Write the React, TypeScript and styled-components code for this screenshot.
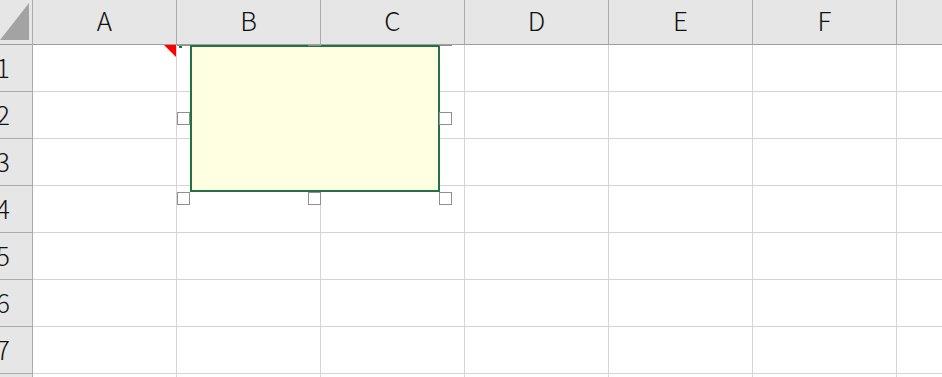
import React from 'react';
import styled, { createGlobalStyle } from 'styled-components';

const GlobalStyle = createGlobalStyle`
  html, body {
    margin: 0;
    padding: 0;
    background: #ffffff;
    overflow: hidden;
  }
`;

const palette = {
  headerBg: '#e6e6e6',
  headerLine: '#ababab',
  headerBottom: '#9e9e9e',
  gridLine: '#d4d4d4',
  green: '#217346',
  commentFill: '#ffffe1',
  handle: '#8f8f8f',
};

const COLUMNS = ['A', 'B', 'C', 'D', 'E', 'F', ''];
const ROWS = [1, 2, 3, 4, 5, 6, 7, 8];

const Sheet = styled.div`
  position: relative;
  display: grid;
  grid-template-columns: 33px repeat(${COLUMNS.length}, 144px);
  grid-template-rows: 45px repeat(${ROWS.length}, 47px);
  font-family: 'Noto Sans CJK JP', 'Noto Sans', sans-serif;
  color: #111;
`;

const Corner = styled.div`
  position: relative;
  z-index: 3;
  background: ${palette.headerBg};
  border-right: 1px solid ${palette.headerLine};
  border-bottom: 1px solid ${palette.headerBottom};
  overflow: hidden;
`;

const ColHeader = styled.div`
  position: relative;
  z-index: 3;
  display: flex;
  align-items: center;
  justify-content: center;
  padding-bottom: 6px;
  box-sizing: border-box;
  background: ${palette.headerBg};
  border-right: 1px solid ${palette.headerLine};
  border-bottom: 1px solid ${palette.headerBottom};
  font-size: 26px;
  font-weight: 300;
`;

// row numbers are scrolled partly out of view on the left, like the screenshot
const RowHeader = styled.div`
  display: flex;
  align-items: center;
  justify-content: flex-end;
  padding-right: 22px;
  padding-bottom: 3px;
  box-sizing: border-box;
  background: ${palette.headerBg};
  border-right: 1px solid ${palette.headerLine};
  border-bottom: 1px solid ${palette.headerLine};
  font-size: 26px;
  font-weight: 300;
  white-space: nowrap;
`;

const Cell = styled.div`
  border-right: 1px solid ${palette.gridLine};
  border-bottom: 1px solid ${palette.gridLine};
`;

const CommentMark = styled.div`
  position: absolute;
  left: 164px;
  top: 45px;
  width: 0;
  height: 0;
  border-top: 12px solid #ff0000;
  border-left: 12px solid transparent;
  z-index: 2;
`;

const Connector = styled.div`
  position: absolute;
  left: 179px;
  top: 46px;
  width: 3px;
  height: 2px;
  background: ${palette.green};
  z-index: 2;
`;

// selected comment shape: the box with its resize handles around it
const Shape = styled.div`
  position: absolute;
  left: 177px;
  top: 33px;
  z-index: 1;
  display: grid;
  grid-template-columns: 13px 249px 13px;
  grid-template-rows: 12px 147px 13px;
`;

const CommentBox = styled.div`
  grid-column: 2;
  grid-row: 2;
  margin-right: -1px;
  box-sizing: border-box;
  background: ${palette.commentFill};
  border: 2px solid ${palette.green};
`;

const Handle = styled.div<{ $col: number; $row: number }>`
  grid-column: ${(p) => p.$col};
  grid-row: ${(p) => p.$row};
  align-self: ${(p) => (p.$row === 1 ? 'end' : p.$row === 2 ? 'center' : 'start')};
  justify-self: ${(p) => (p.$col === 2 ? 'center' : 'start')};
  margin-bottom: ${(p) => (p.$row === 1 ? '-1px' : '0')};
  position: relative;
  z-index: 1;
  width: 13px;
  height: 13px;
  box-sizing: border-box;
  background: #ffffff;
  border: 1px solid ${palette.handle};
`;

const HANDLES = [
  [1, 1],
  [2, 1],
  [3, 1],
  [1, 2],
  [3, 2],
  [1, 3],
  [2, 3],
  [3, 3],
];

function App() {
  return (
    <>
      <GlobalStyle />
      <Sheet>
        <Corner>
          <svg width="32" height="44" viewBox="0 0 32 44">
            <polygon points="29,3 29,40 0,40" fill="#a3a3a3" />
          </svg>
        </Corner>
        {COLUMNS.map((c, i) => (
          <ColHeader key={`h${i}`}>{c}</ColHeader>
        ))}
        {ROWS.map((r) => (
          <React.Fragment key={r}>
            <RowHeader>{r}</RowHeader>
            {COLUMNS.map((_, i) => (
              <Cell key={`${r}-${i}`} />
            ))}
          </React.Fragment>
        ))}
        <CommentMark />
        <Connector />
        <Shape>
          <CommentBox />
          {HANDLES.map(([col, row], i) => (
            <Handle key={i} $col={col} $row={row} />
          ))}
        </Shape>
      </Sheet>
    </>
  );
}

export default App;
